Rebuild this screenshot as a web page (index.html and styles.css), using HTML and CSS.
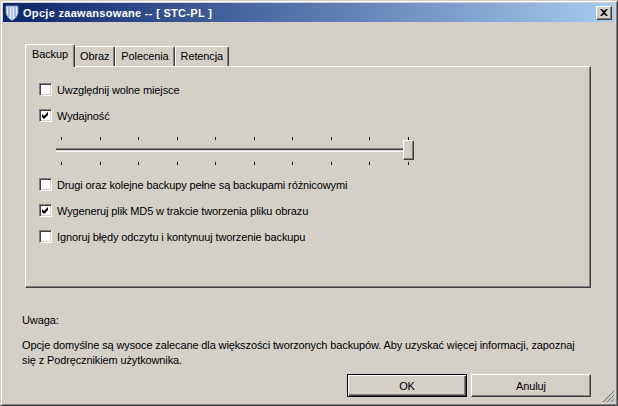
FILE: index.html
```html
<!DOCTYPE html>
<html>
<head>
  <title>Opcje zaawansowane</title>
  <meta charset="utf-8">
  <link rel="stylesheet" href="styles.css">
</head>
<body>
  <div class="window">
    <div class="titlebar">
      <svg class="app-icon" width="14" height="16" viewBox="0 0 14 16">
        <path d="M1 1 L13 1 L13 7 C13 11 10 14 7 15.5 C4 14 1 11 1 7 Z" fill="#e8eef8" stroke="#6d86b8" stroke-width="1"/>
        <path d="M4 2 L4 12" stroke="#8fa6d4" stroke-width="1.5"/>
        <path d="M7 2 L7 14" stroke="#a9bde2" stroke-width="1.5"/>
        <path d="M10 2 L10 12" stroke="#8fa6d4" stroke-width="1.5"/>
      </svg>
      <span class="title">Opcje zaawansowane -- [ STC-PL ]</span>
      <div class="close-btn">
        <svg width="8" height="7" viewBox="0 0 8 7">
          <path d="M0 0 L2 0 L4 2 L6 0 L8 0 L5 3.5 L8 7 L6 7 L4 5 L2 7 L0 7 L3 3.5 Z" fill="#000"/>
        </svg>
      </div>
    </div>

    <div class="content">
      <div class="tabs">
        <div class="tab active">Backup</div>
        <div class="tab">Obraz</div>
        <div class="tab">Polecenia</div>
        <div class="tab">Retencja</div>
      </div>
      <div class="panel">
        <div class="option">
          <span class="checkbox"></span>
          <span>Uwzględnij wolne miejsce</span>
        </div>
        <div class="option second">
          <span class="checkbox checked">
            <svg width="11" height="11" viewBox="0 0 11 11"><path d="M2 4 L4 6 L8 2 L8 5 L4 9 L2 7 Z" fill="#000"/></svg>
          </span>
          <span>Wydajność</span>
        </div>

        <div class="slider">
          <div class="ticks">
            <i></i><i></i><i></i><i></i><i></i><i></i><i></i><i></i><i></i><i></i>
          </div>
          <div class="track-row">
            <div class="track"></div>
            <div class="thumb"></div>
          </div>
          <div class="ticks bottom">
            <i></i><i></i><i></i><i></i><i></i><i></i><i></i><i></i><i></i><i></i>
          </div>
        </div>

        <div class="option after-slider">
          <span class="checkbox"></span>
          <span>Drugi oraz kolejne backupy pełne są backupami różnicowymi</span>
        </div>
        <div class="option">
          <span class="checkbox checked">
            <svg width="11" height="11" viewBox="0 0 11 11"><path d="M2 4 L4 6 L8 2 L8 5 L4 9 L2 7 Z" fill="#000"/></svg>
          </span>
          <span>Wygeneruj plik MD5 w trakcie tworzenia pliku obrazu</span>
        </div>
        <div class="option">
          <span class="checkbox"></span>
          <span>Ignoruj błędy odczytu i kontynuuj tworzenie backupu</span>
        </div>
      </div>

      <div class="note">
        <div class="note-title">Uwaga:</div>
        <div class="note-text">Opcje domyślne są wysoce zalecane dla większości tworzonych backupów. Aby uzyskać więcej informacji, zapoznaj<br>się z Podręcznikiem użytkownika.</div>
      </div>

      <div class="buttons">
        <button class="default">OK</button>
        <button>Anuluj</button>
      </div>
    </div>

    <svg class="grip" width="12" height="12" viewBox="0 0 12 12">
      <path d="M11 1 L1 11 M11 5 L5 11 M11 9 L9 11" stroke="#fff" stroke-width="1"/>
      <path d="M12 1 L1 12 M12 5 L5 12 M12 9 L9 12" stroke="#808080" stroke-width="1.2"/>
    </svg>
  </div>
</body>
</html>
```

FILE: styles.css
```css
body {
  margin: 0;
  background-color: #d4d0c8;
  font-family: 'Liberation Sans', Arial, sans-serif;
  font-size: 11px;
  letter-spacing: -0.12px;
  color: #000;
}
.window {
  position: relative;
  width: 618px;
  height: 406px;
  box-sizing: border-box;
  padding: 2px 3px 2px 2px;
  border: 1px solid;
  border-color: #d4d0c8 #404040 #404040 #d4d0c8;
  box-shadow: inset 1px 1px #fff, inset -1px -1px #808080;
  background-color: #d4d0c8;
}
.titlebar {
  display: flex;
  align-items: center;
  height: 19px;
  padding: 0 2px 0 2px;
  background: linear-gradient(to right, #0a246a, #a6caf0);
  color: #fff;
}
.app-icon {
  margin-right: 4px;
  flex-shrink: 0;
}
.title {
  font-weight: bold;
  font-size: 11px;
  flex: 1;
  letter-spacing: 0.3px;
}
.close-btn {
  width: 16px;
  height: 14px;
  box-sizing: border-box;
  display: flex;
  align-items: center;
  justify-content: center;
  background-color: #d4d0c8;
  border: 1px solid;
  border-color: #fff #404040 #404040 #fff;
  box-shadow: inset -1px -1px #808080;
}
.content {
  padding: 22px 23px 0 22px;
}
.tabs {
  display: flex;
  align-items: flex-end;
  height: 22px;
  padding-left: 2px;
}
.tab {
  position: relative;
  height: 20px;
  box-sizing: border-box;
  line-height: 18px;
  padding: 0 5px 0 5px;
  border-top: 1px solid #fff;
  border-left: 1px solid #fff;
  border-right: 1px solid #404040;
  box-shadow: inset -1px 0 #808080;
  border-radius: 2px 2px 0 0;
}
.tab.active {
  height: 23px;
  margin: 0 -1px -1px -2px;
  padding: 0 6px 0 6px;
  line-height: 19px;
  background-color: #d4d0c8;
  z-index: 1;
}
.panel {
  height: 222px;
  box-sizing: border-box;
  padding: 16px 13px 0 13px;
  border: 1px solid;
  border-color: #fff #404040 #404040 #fff;
  box-shadow: inset -1px -1px #808080;
}
.option {
  display: flex;
  align-items: center;
  height: 13px;
  margin-bottom: 13px;
}
.option.second {
  margin-bottom: 15px;
}
.option span:last-child {
  margin-left: 5px;
}
.checkbox {
  width: 13px;
  height: 13px;
  box-sizing: border-box;
  display: flex;
  align-items: center;
  justify-content: center;
  background-color: #fff;
  border: 1px solid;
  border-color: #808080 #fff #fff #808080;
  box-shadow: inset 1px 1px #404040, inset -1px -1px #d4d0c8;
}
.slider {
  width: 358px;
  margin-left: 17px;
  margin-bottom: 13px;
}
.ticks {
  display: flex;
  justify-content: space-between;
  padding: 0 5px;
  height: 3px;
}
.ticks i {
  display: block;
  width: 1px;
  height: 3px;
  background-color: #000;
}
.ticks.bottom {
  margin-top: 2px;
}
.track-row {
  display: flex;
  align-items: center;
  height: 20px;
}
.track {
  flex: 1;
  height: 4px;
  box-sizing: border-box;
  border-top: 1px solid #808080;
  border-bottom: 1px solid #fff;
  box-shadow: inset 0 1px #404040;
  background-color: #d4d0c8;
}
.thumb {
  width: 11px;
  height: 20px;
  box-sizing: border-box;
  margin-left: -1px;
  background-color: #d4d0c8;
  border: 1px solid;
  border-color: #fff #404040 #404040 #fff;
  box-shadow: inset -1px -1px #808080;
}
.note {
  padding: 26px 0 0 0;
  margin-left: -3px;
}
.note-title {
  line-height: 13px;
  margin-bottom: 11px;
}
.note-text {
  line-height: 15px;
}
.buttons {
  display: flex;
  justify-content: flex-end;
  gap: 4px;
  margin-top: 6px;
}
button {
  width: 120px;
  height: 23px;
  font-family: inherit;
  font-size: 11px;
  letter-spacing: inherit;
  background-color: #d4d0c8;
  color: #000;
  border: 1px solid;
  border-color: #fff #404040 #404040 #fff;
  box-shadow: inset -1px -1px #808080;
  padding: 0;
}
button.default {
  border: 1px solid #000;
  box-shadow: inset 1px 1px #fff, inset -1px -1px #404040, inset -2px -2px #808080;
}
.grip {
  position: absolute;
  right: 3px;
  bottom: 3px;
}
```
